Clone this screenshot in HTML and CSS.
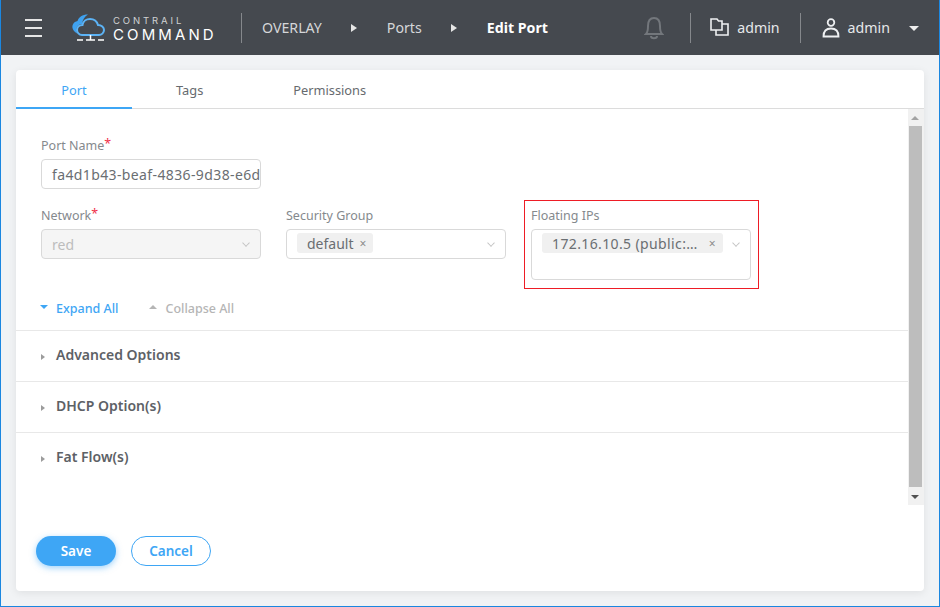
FILE: index.html
```html
<!DOCTYPE html>
<html lang="en">
  <head>
    <meta charset="UTF-8" />
    <title>Edit Port</title>
    <link rel="stylesheet" href="styles.css">
  </head>
  <body>
    <div class="header">
      <div class="burger"><span></span><span></span><span></span></div>
      <div class="logo">
        <svg width="34" height="28" viewBox="0 0 34 28">
          <path d="M16 .5C10 .5 7 3 5.500 7C1.500 8 0 11 .5 14C1 16 2.500 18 5 19.500C4 16 4 13 6 11.500C7.500 10 9 10 10 10C10.500 6 12.500 2.500 16 .5Z" fill="#3fa2f0"/>
          <path d="M10 21C7 21 5 18.500 5 16C5 13 7.500 11 10.500 11C11 7 14.500 5 18 5C22 5 25 7.500 26 11C29.500 11 32 13.500 32 16C32 19 29.500 21 27 21Z" fill="none" stroke="#5cb3f5" stroke-width="2"/>
          <path d="M5 26H11M14 26H23M26 26H32M18.500 21V26" stroke="#fff" stroke-width="1.500" fill="none"/>
        </svg>
        <div class="logo-text">
          <div class="logo-small">CONTRAIL</div>
          <div class="logo-big">COMMAND</div>
        </div>
      </div>
      <div class="sep sep-logo"></div>
      <div class="crumbs">
        <span class="crumb">OVERLAY</span>
        <span class="crumb-arrow"></span>
        <span class="crumb">Ports</span>
        <span class="crumb-arrow"></span>
        <span class="crumb crumb-on">Edit Port</span>
      </div>
      <div class="header-right">
        <svg class="bell" width="20" height="24" viewBox="0 0 20 24">
          <path d="M2 18C4 16 4 14 4 10C4 5 6 2 10 2C14 2 16 5 16 10C16 14 16 16 18 18Z" fill="none" stroke="#73777c" stroke-width="2"/>
          <path d="M7 20C7 23 13 23 13 20" fill="none" stroke="#73777c" stroke-width="2"/>
        </svg>
        <div class="sep sep-bell"></div>
        <svg width="19" height="19" viewBox="0 0 19 19">
          <path d="M1 1H7L8.500 3H12V12H1Z" fill="none" stroke="#eef0f2" stroke-width="1.600"/>
          <path d="M12 6H18V17H6V12" fill="none" stroke="#eef0f2" stroke-width="1.600"/>
        </svg>
        <span class="user user-project">admin</span>
        <div class="sep sep-user"></div>
        <svg width="18" height="20" viewBox="0 0 18 20">
          <circle cx="9" cy="4.500" r="3.300" fill="none" stroke="#eef0f2" stroke-width="1.800"/>
          <path d="M1.500 18.500C1.500 12.500 5 10.500 9 10.500C13 10.500 16.500 12.500 16.500 18.500Z" fill="none" stroke="#eef0f2" stroke-width="1.800"/>
        </svg>
        <span class="user user-name">admin</span>
        <span class="caret-down"></span>
      </div>
    </div>

    <div class="card">
      <div class="tabs">
        <div class="tab tab-on">Port</div>
        <div class="tab">Tags</div>
        <div class="tab">Permissions</div>
      </div>
      <div class="scroll-wrap">
        <div class="form">
          <div class="fields">
            <div class="field field-wide">
              <label>Port Name<i>*</i></label>
              <div class="input spaced">fa4d1b43-beaf-4836-9d38-e6d</div>
            </div>
            <div class="field">
              <label>Network<i>*</i></label>
              <div class="input input-off">red<span class="chev"></span></div>
            </div>
            <div class="field">
              <label>Security Group</label>
              <div class="input input-tags">
                <span class="tag">default<b>×</b></span>
                <span class="chev"></span>
              </div>
            </div>
            <div class="field field-marked">
              <div class="redbox"></div>
              <label>Floating IPs</label>
              <div class="input input-tags input-tall">
                <span class="tag tag-ip spaced">172.16.10.5 (public:…<b>×</b></span>
                <span class="chev"></span>
              </div>
            </div>
          </div>
          <div class="toggles">
            <span class="toggle toggle-on"><span class="tri-down"></span>Expand All</span>
            <span class="toggle"><span class="tri-up"></span>Collapse All</span>
          </div>
          <div class="section"><span class="tri-right"></span>Advanced Options</div>
          <div class="section"><span class="tri-right"></span>DHCP Option(s)</div>
          <div class="section"><span class="tri-right"></span>Fat Flow(s)</div>
        </div>
        <div class="scrollbar">
          <span class="sb-up"></span>
          <div class="sb-thumb"></div>
          <span class="sb-down"></span>
        </div>
      </div>
      <div class="actions">
        <button type="button" class="btn btn-save">Save</button>
        <button type="button" class="btn btn-cancel">Cancel</button>
      </div>
    </div>
  </body>
</html>
```

FILE: styles.css
```css
* {
  box-sizing: border-box;
}
html, body {
  height: 100%;
}
body {
  margin: 0;
  overflow: hidden;
  background: #f1f3f5;
  font-family: "Noto Sans", "Open Sans", sans-serif;
  font-size: 13px;
  color: #55595e;
  border-left: 1px solid #1b87e0;
  border-right: 1px solid #1b87e0;
  border-bottom: 1px solid #1b87e0;
}

/* header */
.header {
  display: flex;
  align-items: center;
  height: 55px;
  background: #45494f;
  color: #fff;
  padding-left: 24px;
}
.burger {
  width: 17px;
  display: flex;
  flex-direction: column;
  gap: 6px;
}
.burger span {
  height: 2px;
  background: #e6e6e6;
}
.logo {
  display: flex;
  align-items: center;
  margin-left: 30px;
  width: 154px;
}
.logo svg {
  margin-right: 7px;
}
.logo-text {
  font-family: "Inter", "Lato", sans-serif;
  line-height: 1;
  padding-top: 3px;
}
.logo-small {
  font-size: 9.500px;
  letter-spacing: 2.900px;
  color: #cfd1d3;
  margin-bottom: 1px;
}
.logo-big {
  font-size: 15px;
  letter-spacing: 3.100px;
  font-weight: 400;
}
.sep {
  width: 1px;
  height: 30px;
  background: #85888c;
}
.sep-logo {
  margin-left: 15px;
}
.crumbs {
  display: flex;
  align-items: center;
  margin-left: 20px;
  font-size: 14.200px;
  color: #d5d7d9;
}
.crumb-on {
  color: #fff;
  font-weight: 700;
}
.crumb-arrow {
  width: 0;
  height: 0;
  margin: 0 30px 0 29px;
  border-left: 6px solid #e6e6e6;
  border-top: 4px solid transparent;
  border-bottom: 4px solid transparent;
}
.header-right {
  display: flex;
  align-items: center;
  margin-left: auto;
}
.sep-bell {
  margin: 0 19px 0 26px;
}
.sep-user {
  margin: 0 21px 0 20px;
}
.user {
  font-size: 14.200px;
  color: #e6e8ea;
  margin-left: 8px;
}
.caret-down {
  width: 0;
  height: 0;
  margin: 2px 20px 0 19px;
  border-top: 5px solid #eee;
  border-left: 5px solid transparent;
  border-right: 5px solid transparent;
}

/* card */
.card {
  margin: 15px 15px 0;
  height: 521px;
  background: #fff;
  border-radius: 4px;
  box-shadow: 0 2px 8px rgba(0, 0, 0, 0.08);
  display: flex;
  flex-direction: column;
}
.tabs {
  display: flex;
  height: 39px;
  border-bottom: 1px solid #dcdcdc;
}
.tab {
  padding: 11px 45px 0;
  font-size: 12.800px;
  color: #666a6e;
}
.tab-on {
  color: #3ea6f5;
  width: 116px;
  margin-right: -1px;
  text-align: center;
  padding: 11px 0 0;
  height: 39px;
  border-bottom: 2px solid #3ea6f5;
}
.scroll-wrap {
  display: flex;
  height: 396px;
}
.form {
  flex: 1;
}
.fields {
  display: grid;
  grid-template-columns: repeat(3, 220px);
  column-gap: 25px;
  row-gap: 18px;
  padding: 28px 0 0 25px;
}
.field-wide {
  grid-column: 1 / 4;
  width: 220px;
}
.field {
  position: relative;
}
.field label {
  display: block;
  height: 22px;
  font-size: 12.500px;
  line-height: 18px;
  color: #85898d;
}
.field label i {
  color: #f0304a;
  font-style: normal;
  position: relative;
  top: -2px;
}
.input {
  display: flex;
  align-items: center;
  position: relative;
  height: 30px;
  padding-left: 10px;
  border: 1px solid #d9d9d9;
  border-radius: 4px;
  font-size: 14px;
  color: #6a6e72;
  white-space: nowrap;
  overflow: hidden;
}
.spaced {
  letter-spacing: 0.380px;
}
.input-off {
  background: #f5f5f5;
  color: #bdbdbd;
}
.input-tags {
  align-items: flex-start;
  padding-top: 3px;
}
.input-tall {
  height: 51px;
}
.chev {
  position: absolute;
  right: 11px;
  top: 10px;
  width: 6px;
  height: 6px;
  border-right: 1px solid #c4c4c4;
  border-bottom: 1px solid #c4c4c4;
  transform: rotate(45deg) scale(0.9);
}
.tag {
  display: flex;
  align-items: center;
  justify-content: space-between;
  height: 20px;
  padding: 0 7px 0 10px;
  background: #f0f0f0;
  border-radius: 3px;
  font-size: 14px;
  color: #6a6e72;
}
.tag b {
  font-weight: 400;
  font-size: 12px;
  color: #8c8c8c;
  margin-left: 6px;
}
.tag-ip {
  width: 181px;
}
.redbox {
  position: absolute;
  left: -7px;
  top: -7px;
  width: 235px;
  height: 89px;
  border: 1px solid #ee1c25;
  pointer-events: none;
}
.toggles {
  display: flex;
  gap: 31px;
  padding: 19px 0 0 24px;
  height: 50px;
  font-size: 12.500px;
  color: #b5b5b5;
}
.toggle {
  display: flex;
  align-items: center;
  height: 18px;
  font-weight: 500;
}
.toggle-on {
  color: #3ea6f5;
}
.tri-down, .tri-up {
  width: 0;
  height: 0;
  margin-right: 8px;
  border-left: 4.500px solid transparent;
  border-right: 4.500px solid transparent;
}
.tri-down {
  border-top: 4px solid #3ea6f5;
  margin-top: -3px;
}
.tri-up {
  border-bottom: 4px solid #b5b5b5;
  margin-top: -3px;
}
.section {
  display: flex;
  align-items: center;
  height: 51px;
  border-top: 1px solid #e8e8e8;
  padding: 0 0 4px 25px;
  font-size: 14px;
  font-weight: 600;
  color: #5d6166;
}
.tri-right {
  width: 0;
  height: 0;
  margin: 5px 11px 0 0;
  border-left: 4px solid #9c9c9c;
  border-top: 3.500px solid transparent;
  border-bottom: 3.500px solid transparent;
}
.scrollbar {
  width: 16px;
  padding-left: 1px;
  background: #f1f1f1;
  display: flex;
  flex-direction: column;
  align-items: flex-start;
}
.sb-thumb {
  width: 13px;
  height: 361px;
  background: #bdbdbd;
  margin: 6px 0 0;
}
.sb-up, .sb-down {
  width: 0;
  height: 0;
  margin-left: 2px;
  border-left: 4px solid transparent;
  border-right: 4px solid transparent;
}
.sb-up {
  margin-top: 7px;
  border-bottom: 4px solid #a3a3a3;
}
.sb-down {
  margin-top: 8px;
  border-top: 4px solid #505050;
}

/* buttons */
.actions {
  display: flex;
  gap: 15px;
  padding: 31px 0 0 20px;
}
.btn {
  width: 80px;
  height: 30px;
  border-radius: 15px;
  font-family: inherit;
  font-size: 13.500px;
  font-weight: 600;
  padding: 0;
}
.btn-save {
  border: 0;
  background: #3ea6f5;
  color: #fff;
  box-shadow: 0 2px 6px rgba(62, 166, 245, 0.5);
}
.btn-cancel {
  border: 1px solid #3ea6f5;
  background: #fff;
  color: #3ea6f5;
}
```
